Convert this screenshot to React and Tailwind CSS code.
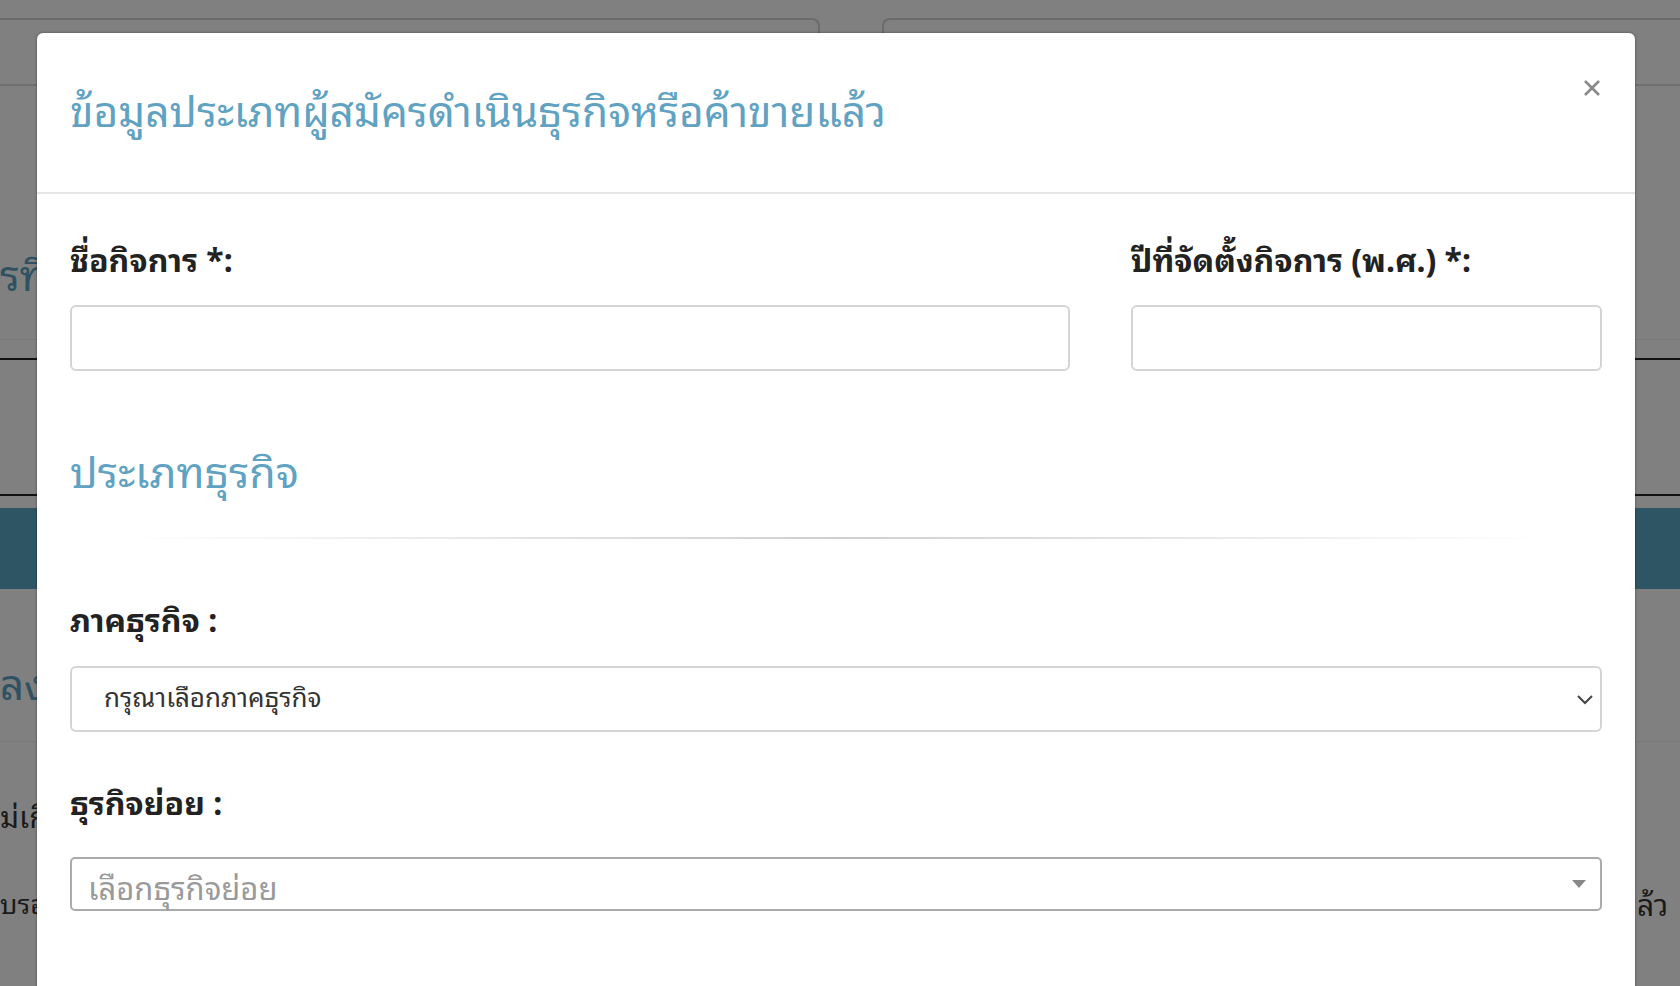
import React from "react";

const thai = { fontFamily: '"Noto Sans Thai Looped", "Loma", "Garuda", "Noto Sans Thai", "Noto Sans", "DejaVu Sans", sans-serif' };

function Background() {
  return (
    <div className="absolute inset-0">
      {/* top cards */}
      <div className="flex h-[84px] pt-[18px]">
        <div className="ml-[-20px] w-[840px] rounded-tr-[8px] border-r-2 border-t-2 border-[#6b6b6b]" />
        <div className="ml-[62px] flex-1 rounded-tl-[8px] border-l-2 border-t-2 border-[#6b6b6b]" />
      </div>
      <div className="h-[2px] bg-[#6f6f6f]" />
      <div className="flex h-[207px] items-end">
        <span className="whitespace-nowrap text-[42px] leading-none text-[#2f5262]">รที่</span>
      </div>
      <div className="mt-[46px] h-[1px] bg-[#787878]" />
      <div className="mt-[18px] h-[2px] bg-[#111]" />
      <div className="mt-[134px] h-[2px] bg-[#111]" />
      <div className="mt-[12px] h-[81px] bg-[#2e5564]" />
      <div className="mt-[71px] flex">
        <span className="whitespace-nowrap text-[42px] leading-none text-[#2f5262]">ลง</span>
      </div>
      <div className="mt-[39px] h-[1px] bg-[#787878]" />
      <div className="mt-[58px] flex">
        <span className="whitespace-nowrap text-[30px] leading-none text-[#1a1a1a]">ม่เกิ</span>
      </div>
      <div className="mt-[58px] flex justify-between">
        <span className="whitespace-nowrap text-[27px] leading-none text-[#1a1a1a]">บรอ</span>
        <span className="w-[43px] whitespace-nowrap text-[30px] leading-none text-[#1a1a1a]">ล้ว</span>
      </div>
    </div>
  );
}

export default function App() {
  return (
    <div className="relative h-[986px] w-[1680px] overflow-hidden bg-[#808080]" style={thai}>
      <Background />
      <div className="absolute left-[37px] top-[33px] h-[1000px] w-[1598px] rounded-t-[6px] bg-white shadow-[0_0_3px_rgba(0,0,0,0.4)]">
        {/* header */}
        <div className="relative flex h-[161px] items-center border-b-2 border-[#e5e5e5] pl-[33px]">
          <h4 className="mt-[-9px] whitespace-nowrap text-[42.4px] font-normal leading-none text-[#5fa2c2]">
            ข้อมูลประเภทผู้สมัครดำเนินธุรกิจหรือค้าขายแล้ว
          </h4>
          <button className="absolute right-[34px] top-[46px] flex h-[18px] w-[18px] items-center justify-center text-[#8a8a8a]">
            <svg width="18" height="18" viewBox="0 0 18 18" fill="none" stroke="currentColor" strokeWidth="2.6" strokeLinecap="butt">
              <path d="M2 2 L16 16 M16 2 L2 16" />
            </svg>
          </button>
        </div>
        {/* body */}
        <div className="px-[33px]">
          <div className="flex gap-[61px] pt-[42px]">
            <div className="w-[1000px]">
              <label className="block h-[44px] text-[32px] font-bold leading-[44px] text-[#222]">ชื่อกิจการ *:</label>
              <div className="mt-[25px] h-[66px] rounded-[6px] border-2 border-[#d4d4d4]" />
            </div>
            <div className="flex-1">
              <label className="block h-[44px] text-[32px] font-bold leading-[44px] text-[#222]">ปีที่จัดตั้งกิจการ (พ.ศ.) *:</label>
              <div className="mt-[25px] h-[66px] rounded-[6px] border-2 border-[#d4d4d4]" />
            </div>
          </div>
          <h3 className="mt-[73px] h-[50px] text-[43px] font-normal leading-[50px] text-[#5fa2c2]">ประเภทธุรกิจ</h3>
          <div className="mx-auto mt-[43px] h-[2px] w-[1415px] bg-gradient-to-r from-transparent via-[#cfcfcf] to-transparent" />
          <label className="mt-[57px] block h-[44px] text-[32px] font-bold leading-[44px] text-[#222]">ภาคธุรกิจ :</label>
          <div className="mt-[26px] flex h-[66px] items-center justify-between rounded-[6px] border-2 border-[#d4d4d4] pl-[32px] pr-[6px]">
            <span className="pb-[7px] text-[26px] text-[#333]">กรุณาเลือกภาคธุรกิจ</span>
            <svg width="18" height="12" viewBox="0 0 18 12" fill="none" stroke="#444" strokeWidth="2">
              <path d="M2 3 L9 10 L16 3" />
            </svg>
          </div>
          <label className="mt-[47px] block h-[44px] text-[32px] font-bold leading-[44px] text-[#222]">ธุรกิจย่อย :</label>
          <div className="mt-[34px] flex h-[54px] items-center justify-between rounded-[5px] border-2 border-[#aaa] pl-[16px] pr-[14px]">
            <span className="pt-[4px] text-[31px] text-[#9a9a9a]">เลือกธุรกิจย่อย</span>
            <svg width="14" height="10" viewBox="0 0 14 10">
              <path d="M0 1 L14 1 L7 9 Z" fill="#888" />
            </svg>
          </div>
        </div>
      </div>
    </div>
  );
}
